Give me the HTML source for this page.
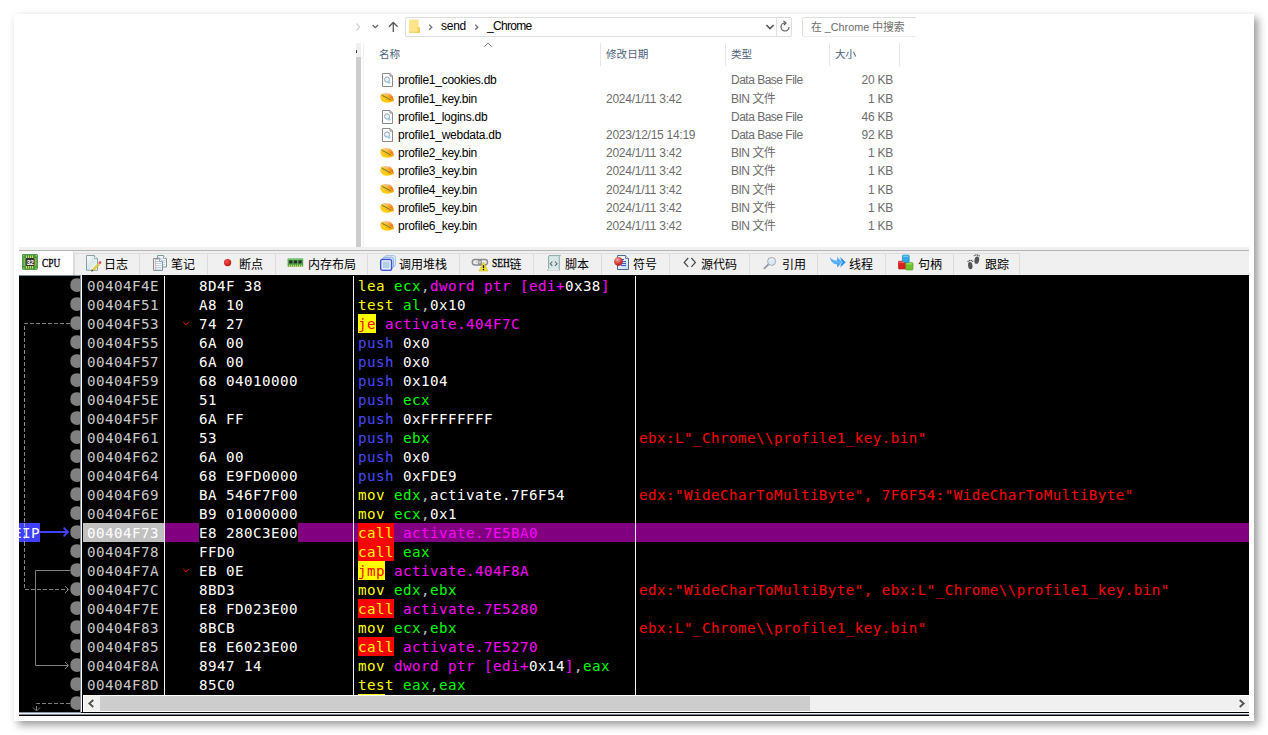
<!DOCTYPE html>
<html lang="zh-CN"><head><meta charset="utf-8"><title>x32dbg - _Chrome</title>
<style>
html,body{margin:0;padding:0;background:#fff;}
body{width:1268px;height:735px;position:relative;overflow:hidden;font-family:"Liberation Sans","Noto Sans CJK SC",sans-serif;}
.card{position:absolute;left:14px;top:14px;width:1240px;height:707px;background:#fff;box-shadow:4px 4px 8px rgba(0,0,0,.4);}
.abs{position:absolute;}
.ex{position:absolute;font-family:"Liberation Sans","Noto Sans CJK SC",sans-serif;font-size:12px;letter-spacing:-0.26px;color:#000;white-space:nowrap;line-height:16px;height:16px;}
.ex.h{color:#4c607a;font-size:10.6px;letter-spacing:0;}
.ex.t{letter-spacing:-0.5px;}
.ex.g{color:#6d6d6d;}
.dbg{position:absolute;left:19px;top:275px;width:1230px;height:438px;background:#000;overflow:hidden;}
.mono{font-family:"DejaVu Sans Mono","Liberation Mono",monospace;font-size:14.2px;line-height:19px;height:19px;white-space:pre;position:absolute;letter-spacing:0.452px;}
.y{color:#ffff00}.g{color:#00ff00}.c{color:#c0c0c0}.m{color:#ff00ff}.w{color:#fff}.b{color:#4848ff}
.je{color:#ff0000}.call{color:#ffff00}
.cm{color:#ff0000}
.ad{color:#c8c8c8}
.tab{position:absolute;top:253px;height:22px;box-sizing:border-box;border:1px solid #dcdcdc;border-bottom:none;background:#f0f0f0;}
.tt{position:absolute;top:259px;font-family:"Liberation Serif","Noto Sans CJK SC",sans-serif;font-weight:400;font-size:12px;line-height:12px;height:12px;color:#000;white-space:nowrap;}
.tt i{font-style:normal;font-weight:400;display:inline-block;transform:scaleX(.78);transform-origin:0 50%;width:18px;position:relative;top:-2px;-webkit-text-stroke:.3px #000;}
</style></head><body>
<div class="card"></div>

<div class="abs" style="left:355px;top:19px;width:561px;height:228px;background:#fff;overflow:hidden" id="explorer">
</div>
<div class="abs" style="left:356px;top:43px;width:5px;height:204px;background:#f0f0f0"></div>
<div class="abs" style="left:356px;top:57px;width:5px;height:190px;background:#cdcdcd"></div>
<div class="abs" style="left:363px;top:43px;width:1px;height:204px;background:#f2f2f2"></div>
<div class="abs" style="left:356px;top:50px;width:1px;height:3px;background:#444"></div>
<div class="abs" style="left:404.5px;top:16.5px;width:387px;height:20px;box-sizing:border-box;border:1px solid #dedede;border-radius:2px;background:#fff"></div>
<div class="abs" style="left:776px;top:17px;width:1px;height:19px;background:#e0e0e0"></div>
<div class="abs" style="left:802px;top:16.5px;width:116px;height:20px;box-sizing:border-box;border:1px solid #dedede;border-radius:2px;background:#fff;clip-path:inset(0 2px 0 0)"></div>
<svg class="abs" style="left:355px;top:17px" width="50" height="20" viewBox="0 0 50 20">
<path d="M1.5 6.5 L4.5 10 L1.5 13.5" fill="none" stroke="#d0d0d0" stroke-width="1.2"/>
<path d="M17.6 8 L20.3 10.7 L23 8" fill="none" stroke="#606060" stroke-width="1.2"/>
<path d="M38.3 15 V5.5 M34 9.8 L38.3 5.4 L42.6 9.8" fill="none" stroke="#555" stroke-width="1.3"/>
</svg>
<svg class="abs" style="left:408px;top:18px" width="14" height="16" viewBox="0 0 14 16">
<path d="M1 1.5 H10.6 V14.5 H1 Z" fill="#ffe48c"/><path d="M9.4 9 H12 V14.5 H9.4 Z" fill="#f6d264"/><path d="M1 13.8 H12 V14.8 H1 Z" fill="#f3cc58"/>
</svg>
<svg class="abs" style="left:426px;top:21px" width="10" height="12" viewBox="0 0 10 12"><path d="M3.2 3.6 L5.8 6.2 L3.2 8.8" fill="none" stroke="#707070" stroke-width="1.3"/></svg>
<div class="ex" style="left:441px;top:18px;">send</div>
<svg class="abs" style="left:472px;top:21px" width="10" height="12" viewBox="0 0 10 12"><path d="M3.2 3.6 L5.8 6.2 L3.2 8.8" fill="none" stroke="#707070" stroke-width="1.3"/></svg>
<div class="ex" style="left:487px;top:18px;letter-spacing:-0.7px">_Chrome</div>
<svg class="abs" style="left:764px;top:21px" width="12" height="12" viewBox="0 0 12 12"><path d="M2.4 4 L6 7.6 L9.6 4" fill="none" stroke="#555" stroke-width="1.5"/></svg>
<svg class="abs" style="left:779px;top:20px" width="12" height="14" viewBox="0 0 12 14"><path d="M6 3 A4 4 0 1 0 10 7" fill="none" stroke="#555" stroke-width="1.1"/><path d="M4.5 1 L7 3 L5 5" fill="none" stroke="#555" stroke-width="1.1"/></svg>
<div class="ex g" style="left:811px;top:19px;font-size:10.8px;letter-spacing:0">在 _Chrome 中搜索</div>
<div class="abs" style="left:600px;top:43px;width:1px;height:23px;background:#e5e5e5"></div>
<div class="abs" style="left:725px;top:43px;width:1px;height:23px;background:#e5e5e5"></div>
<div class="abs" style="left:829px;top:43px;width:1px;height:23px;background:#e5e5e5"></div>
<div class="abs" style="left:899px;top:43px;width:1px;height:23px;background:#e5e5e5"></div>
<div class="ex h" style="left:379px;top:46px;">名称</div>
<div class="ex h" style="left:606px;top:46px;">修改日期</div>
<div class="ex h" style="left:731px;top:46px;">类型</div>
<div class="ex h" style="left:835px;top:46px;">大小</div>
<svg class="abs" style="left:482px;top:41px" width="12" height="8" viewBox="0 0 12 8"><path d="M2.5 5.5 L6 2 L9.5 5.5" fill="none" stroke="#777" stroke-width="1"/></svg>
<svg class="abs" style="left:382px;top:73px" width="12" height="15" viewBox="0 0 12 15"><path d="M0.5 0.5 H8 L10.5 3 V13.5 H0.5 Z" fill="#fff" stroke="#8a8a8a" stroke-width="1"/><path d="M8 0.5 V3 H10.5" fill="none" stroke="#8a8a8a" stroke-width="1"/><circle cx="5" cy="6.5" r="2.6" fill="#e8eef5" stroke="#9aa7b5" stroke-width="1"/><circle cx="7" cy="9.3" r="1.5" fill="#9fd0f0"/></svg>
<div class="ex" style="left:398px;top:72px;">profile1_cookies.db</div>
<div class="ex g t" style="left:731px;top:72px;">Data Base File</div>
<div class="ex g" style="left:829px;top:72px;width:64px;text-align:right">20 KB</div>
<svg class="abs" style="left:380px;top:92px" width="15" height="12" viewBox="0 0 15 12"><defs><linearGradient id="bg1" x1="0.3" y1="0" x2="0.1" y2="1"><stop offset="0" stop-color="#fbc49a"/><stop offset="0.45" stop-color="#ffc830"/><stop offset="1" stop-color="#ffd400"/></linearGradient><radialGradient id="bo1" cx="0.85" cy="0.5" r="0.55"><stop offset="0" stop-color="#ff6a08"/><stop offset="1" stop-color="#ff8a10" stop-opacity="0"/></radialGradient></defs><path id="bp1" d="M0.3 4.2 C0.5 2.4 2.5 1.3 5 1 C8 0.6 10.6 1.2 12 3.4 C13 5 13.8 7.4 14 9 C12.6 9.6 11 10.1 9 10.6 C6 11.3 3 10.5 1.5 8.6 C0.5 7.2 0.2 5.6 0.3 4.2 Z" fill="url(#bg1)"/><path d="M0.3 4.2 C0.5 2.4 2.5 1.3 5 1 C8 0.6 10.6 1.2 12 3.4 C13 5 13.8 7.4 14 9 C12.6 9.6 11 10.1 9 10.6 C6 11.3 3 10.5 1.5 8.6 C0.5 7.2 0.2 5.6 0.3 4.2 Z" fill="url(#bo1)"/><path d="M1.6 2.6 L11.2 7.4" stroke="#d8cc20" stroke-width="1.6" stroke-linecap="round"/><path d="M2.4 3.6 L10.8 7.8" stroke="#7a6a18" stroke-width="0.9" stroke-linecap="round"/></svg>
<div class="ex" style="left:398px;top:91px;">profile1_key.bin</div>
<div class="ex g" style="left:606px;top:91px;">2024/1/11 3:42</div>
<div class="ex g t" style="left:731px;top:91px;">BIN 文件</div>
<div class="ex g" style="left:829px;top:91px;width:64px;text-align:right">1 KB</div>
<svg class="abs" style="left:382px;top:110px" width="12" height="15" viewBox="0 0 12 15"><path d="M0.5 0.5 H8 L10.5 3 V13.5 H0.5 Z" fill="#fff" stroke="#8a8a8a" stroke-width="1"/><path d="M8 0.5 V3 H10.5" fill="none" stroke="#8a8a8a" stroke-width="1"/><circle cx="5" cy="6.5" r="2.6" fill="#e8eef5" stroke="#9aa7b5" stroke-width="1"/><circle cx="7" cy="9.3" r="1.5" fill="#9fd0f0"/></svg>
<div class="ex" style="left:398px;top:109px;">profile1_logins.db</div>
<div class="ex g t" style="left:731px;top:109px;">Data Base File</div>
<div class="ex g" style="left:829px;top:109px;width:64px;text-align:right">46 KB</div>
<svg class="abs" style="left:382px;top:128px" width="12" height="15" viewBox="0 0 12 15"><path d="M0.5 0.5 H8 L10.5 3 V13.5 H0.5 Z" fill="#fff" stroke="#8a8a8a" stroke-width="1"/><path d="M8 0.5 V3 H10.5" fill="none" stroke="#8a8a8a" stroke-width="1"/><circle cx="5" cy="6.5" r="2.6" fill="#e8eef5" stroke="#9aa7b5" stroke-width="1"/><circle cx="7" cy="9.3" r="1.5" fill="#9fd0f0"/></svg>
<div class="ex" style="left:398px;top:127px;">profile1_webdata.db</div>
<div class="ex g" style="left:606px;top:127px;">2023/12/15 14:19</div>
<div class="ex g t" style="left:731px;top:127px;">Data Base File</div>
<div class="ex g" style="left:829px;top:127px;width:64px;text-align:right">92 KB</div>
<svg class="abs" style="left:380px;top:147px" width="15" height="12" viewBox="0 0 15 12"><defs><linearGradient id="bg4" x1="0.3" y1="0" x2="0.1" y2="1"><stop offset="0" stop-color="#fbc49a"/><stop offset="0.45" stop-color="#ffc830"/><stop offset="1" stop-color="#ffd400"/></linearGradient><radialGradient id="bo4" cx="0.85" cy="0.5" r="0.55"><stop offset="0" stop-color="#ff6a08"/><stop offset="1" stop-color="#ff8a10" stop-opacity="0"/></radialGradient></defs><path id="bp4" d="M0.3 4.2 C0.5 2.4 2.5 1.3 5 1 C8 0.6 10.6 1.2 12 3.4 C13 5 13.8 7.4 14 9 C12.6 9.6 11 10.1 9 10.6 C6 11.3 3 10.5 1.5 8.6 C0.5 7.2 0.2 5.6 0.3 4.2 Z" fill="url(#bg4)"/><path d="M0.3 4.2 C0.5 2.4 2.5 1.3 5 1 C8 0.6 10.6 1.2 12 3.4 C13 5 13.8 7.4 14 9 C12.6 9.6 11 10.1 9 10.6 C6 11.3 3 10.5 1.5 8.6 C0.5 7.2 0.2 5.6 0.3 4.2 Z" fill="url(#bo4)"/><path d="M1.6 2.6 L11.2 7.4" stroke="#d8cc20" stroke-width="1.6" stroke-linecap="round"/><path d="M2.4 3.6 L10.8 7.8" stroke="#7a6a18" stroke-width="0.9" stroke-linecap="round"/></svg>
<div class="ex" style="left:398px;top:145px;">profile2_key.bin</div>
<div class="ex g" style="left:606px;top:145px;">2024/1/11 3:42</div>
<div class="ex g t" style="left:731px;top:145px;">BIN 文件</div>
<div class="ex g" style="left:829px;top:145px;width:64px;text-align:right">1 KB</div>
<svg class="abs" style="left:380px;top:165px" width="15" height="12" viewBox="0 0 15 12"><defs><linearGradient id="bg5" x1="0.3" y1="0" x2="0.1" y2="1"><stop offset="0" stop-color="#fbc49a"/><stop offset="0.45" stop-color="#ffc830"/><stop offset="1" stop-color="#ffd400"/></linearGradient><radialGradient id="bo5" cx="0.85" cy="0.5" r="0.55"><stop offset="0" stop-color="#ff6a08"/><stop offset="1" stop-color="#ff8a10" stop-opacity="0"/></radialGradient></defs><path id="bp5" d="M0.3 4.2 C0.5 2.4 2.5 1.3 5 1 C8 0.6 10.6 1.2 12 3.4 C13 5 13.8 7.4 14 9 C12.6 9.6 11 10.1 9 10.6 C6 11.3 3 10.5 1.5 8.6 C0.5 7.2 0.2 5.6 0.3 4.2 Z" fill="url(#bg5)"/><path d="M0.3 4.2 C0.5 2.4 2.5 1.3 5 1 C8 0.6 10.6 1.2 12 3.4 C13 5 13.8 7.4 14 9 C12.6 9.6 11 10.1 9 10.6 C6 11.3 3 10.5 1.5 8.6 C0.5 7.2 0.2 5.6 0.3 4.2 Z" fill="url(#bo5)"/><path d="M1.6 2.6 L11.2 7.4" stroke="#d8cc20" stroke-width="1.6" stroke-linecap="round"/><path d="M2.4 3.6 L10.8 7.8" stroke="#7a6a18" stroke-width="0.9" stroke-linecap="round"/></svg>
<div class="ex" style="left:398px;top:163px;">profile3_key.bin</div>
<div class="ex g" style="left:606px;top:163px;">2024/1/11 3:42</div>
<div class="ex g t" style="left:731px;top:163px;">BIN 文件</div>
<div class="ex g" style="left:829px;top:163px;width:64px;text-align:right">1 KB</div>
<svg class="abs" style="left:380px;top:183px" width="15" height="12" viewBox="0 0 15 12"><defs><linearGradient id="bg6" x1="0.3" y1="0" x2="0.1" y2="1"><stop offset="0" stop-color="#fbc49a"/><stop offset="0.45" stop-color="#ffc830"/><stop offset="1" stop-color="#ffd400"/></linearGradient><radialGradient id="bo6" cx="0.85" cy="0.5" r="0.55"><stop offset="0" stop-color="#ff6a08"/><stop offset="1" stop-color="#ff8a10" stop-opacity="0"/></radialGradient></defs><path id="bp6" d="M0.3 4.2 C0.5 2.4 2.5 1.3 5 1 C8 0.6 10.6 1.2 12 3.4 C13 5 13.8 7.4 14 9 C12.6 9.6 11 10.1 9 10.6 C6 11.3 3 10.5 1.5 8.6 C0.5 7.2 0.2 5.6 0.3 4.2 Z" fill="url(#bg6)"/><path d="M0.3 4.2 C0.5 2.4 2.5 1.3 5 1 C8 0.6 10.6 1.2 12 3.4 C13 5 13.8 7.4 14 9 C12.6 9.6 11 10.1 9 10.6 C6 11.3 3 10.5 1.5 8.6 C0.5 7.2 0.2 5.6 0.3 4.2 Z" fill="url(#bo6)"/><path d="M1.6 2.6 L11.2 7.4" stroke="#d8cc20" stroke-width="1.6" stroke-linecap="round"/><path d="M2.4 3.6 L10.8 7.8" stroke="#7a6a18" stroke-width="0.9" stroke-linecap="round"/></svg>
<div class="ex" style="left:398px;top:182px;">profile4_key.bin</div>
<div class="ex g" style="left:606px;top:182px;">2024/1/11 3:42</div>
<div class="ex g t" style="left:731px;top:182px;">BIN 文件</div>
<div class="ex g" style="left:829px;top:182px;width:64px;text-align:right">1 KB</div>
<svg class="abs" style="left:380px;top:202px" width="15" height="12" viewBox="0 0 15 12"><defs><linearGradient id="bg7" x1="0.3" y1="0" x2="0.1" y2="1"><stop offset="0" stop-color="#fbc49a"/><stop offset="0.45" stop-color="#ffc830"/><stop offset="1" stop-color="#ffd400"/></linearGradient><radialGradient id="bo7" cx="0.85" cy="0.5" r="0.55"><stop offset="0" stop-color="#ff6a08"/><stop offset="1" stop-color="#ff8a10" stop-opacity="0"/></radialGradient></defs><path id="bp7" d="M0.3 4.2 C0.5 2.4 2.5 1.3 5 1 C8 0.6 10.6 1.2 12 3.4 C13 5 13.8 7.4 14 9 C12.6 9.6 11 10.1 9 10.6 C6 11.3 3 10.5 1.5 8.6 C0.5 7.2 0.2 5.6 0.3 4.2 Z" fill="url(#bg7)"/><path d="M0.3 4.2 C0.5 2.4 2.5 1.3 5 1 C8 0.6 10.6 1.2 12 3.4 C13 5 13.8 7.4 14 9 C12.6 9.6 11 10.1 9 10.6 C6 11.3 3 10.5 1.5 8.6 C0.5 7.2 0.2 5.6 0.3 4.2 Z" fill="url(#bo7)"/><path d="M1.6 2.6 L11.2 7.4" stroke="#d8cc20" stroke-width="1.6" stroke-linecap="round"/><path d="M2.4 3.6 L10.8 7.8" stroke="#7a6a18" stroke-width="0.9" stroke-linecap="round"/></svg>
<div class="ex" style="left:398px;top:200px;">profile5_key.bin</div>
<div class="ex g" style="left:606px;top:200px;">2024/1/11 3:42</div>
<div class="ex g t" style="left:731px;top:200px;">BIN 文件</div>
<div class="ex g" style="left:829px;top:200px;width:64px;text-align:right">1 KB</div>
<svg class="abs" style="left:380px;top:220px" width="15" height="12" viewBox="0 0 15 12"><defs><linearGradient id="bg8" x1="0.3" y1="0" x2="0.1" y2="1"><stop offset="0" stop-color="#fbc49a"/><stop offset="0.45" stop-color="#ffc830"/><stop offset="1" stop-color="#ffd400"/></linearGradient><radialGradient id="bo8" cx="0.85" cy="0.5" r="0.55"><stop offset="0" stop-color="#ff6a08"/><stop offset="1" stop-color="#ff8a10" stop-opacity="0"/></radialGradient></defs><path id="bp8" d="M0.3 4.2 C0.5 2.4 2.5 1.3 5 1 C8 0.6 10.6 1.2 12 3.4 C13 5 13.8 7.4 14 9 C12.6 9.6 11 10.1 9 10.6 C6 11.3 3 10.5 1.5 8.6 C0.5 7.2 0.2 5.6 0.3 4.2 Z" fill="url(#bg8)"/><path d="M0.3 4.2 C0.5 2.4 2.5 1.3 5 1 C8 0.6 10.6 1.2 12 3.4 C13 5 13.8 7.4 14 9 C12.6 9.6 11 10.1 9 10.6 C6 11.3 3 10.5 1.5 8.6 C0.5 7.2 0.2 5.6 0.3 4.2 Z" fill="url(#bo8)"/><path d="M1.6 2.6 L11.2 7.4" stroke="#d8cc20" stroke-width="1.6" stroke-linecap="round"/><path d="M2.4 3.6 L10.8 7.8" stroke="#7a6a18" stroke-width="0.9" stroke-linecap="round"/></svg>
<div class="ex" style="left:398px;top:218px;">profile6_key.bin</div>
<div class="ex g" style="left:606px;top:218px;">2024/1/11 3:42</div>
<div class="ex g t" style="left:731px;top:218px;">BIN 文件</div>
<div class="ex g" style="left:829px;top:218px;width:64px;text-align:right">1 KB</div>
<div class="abs" style="left:19px;top:247px;width:1230px;height:3px;background:#f0f0f0"></div>
<div class="abs" style="left:19px;top:250px;width:1230px;height:1px;background:#b4b4b4"></div>
<div class="abs" style="left:19px;top:251px;width:1230px;height:24px;background:#f0f0f0"></div>
<div class="abs" style="left:19px;top:251px;width:55px;height:24px;background:#fff;border-right:1px solid #dcdcdc;box-sizing:border-box"></div>
<div class="tt" style="left:41.5px"><i>CPU</i></div>
<div class="tab" style="left:74px;width:66px"></div>
<div class="tt" style="left:104px">日志</div>
<div class="tab" style="left:139px;width:69px"></div>
<div class="tt" style="left:171px">笔记</div>
<div class="tab" style="left:207px;width:69px"></div>
<div class="tt" style="left:239px">断点</div>
<div class="tab" style="left:275px;width:93px"></div>
<div class="tt" style="left:308px">内存布局</div>
<div class="tab" style="left:367px;width:93px"></div>
<div class="tt" style="left:399px">调用堆栈</div>
<div class="tab" style="left:459px;width:75px"></div>
<div class="tt" style="left:491.5px"><i>SEH</i>链</div>
<div class="tab" style="left:533px;width:69px"></div>
<div class="tt" style="left:565px">脚本</div>
<div class="tab" style="left:601px;width:69px"></div>
<div class="tt" style="left:633px">符号</div>
<div class="tab" style="left:669px;width:81px"></div>
<div class="tt" style="left:701px">源代码</div>
<div class="tab" style="left:749px;width:69px"></div>
<div class="tt" style="left:782px">引用</div>
<div class="tab" style="left:817px;width:69px"></div>
<div class="tt" style="left:849px">线程</div>
<div class="tab" style="left:885px;width:69px"></div>
<div class="tt" style="left:918px">句柄</div>
<div class="tab" style="left:953px;width:67px"></div>
<div class="tt" style="left:985px">跟踪</div>
<svg class="abs" style="left:22px;top:254px" width="16" height="16" viewBox="0 0 16 16">
<rect x="0.3" y="0.3" width="15.2" height="15.2" rx="1.2" fill="#3d9b3d" stroke="#2b7a2b" stroke-width=".6"/>
<g fill="#e8d060"><rect x="4" y="1.5" width="1" height="2.5"/><rect x="6" y="1.5" width="1" height="2.5"/><rect x="8" y="1.5" width="1" height="2.5"/><rect x="10" y="1.5" width="1" height="2.5"/>
<rect x="4" y="12" width="1" height="2.5"/><rect x="6" y="12" width="1" height="2.5"/><rect x="8" y="12" width="1" height="2.5"/><rect x="10" y="12" width="1" height="2.5"/>
<rect x="1.5" y="4.5" width="2.5" height="1"/><rect x="1.5" y="6.5" width="2.5" height="1"/><rect x="1.5" y="8.5" width="2.5" height="1"/><rect x="1.5" y="10.5" width="2.5" height="1"/>
<rect x="12" y="4.5" width="2.5" height="1"/><rect x="12" y="6.5" width="2.5" height="1"/><rect x="12" y="8.5" width="2.5" height="1"/><rect x="12" y="10.5" width="2.5" height="1"/>
<rect x="1.2" y="1.2" width="1.2" height="1.2"/><rect x="13.6" y="1.2" width="1.2" height="1.2"/><rect x="1.2" y="13.6" width="1.2" height="1.2"/><rect x="13.6" y="13.6" width="1.2" height="1.2"/></g>
<rect x="3.5" y="4" width="9" height="8" rx="1" fill="#333"/>
<text x="8" y="10.6" font-family="Liberation Sans,sans-serif" font-weight="bold" font-size="7" fill="#fff" text-anchor="middle" letter-spacing="-0.3">32</text>
</svg>
<svg class="abs" style="left:84px;top:254px" width="18" height="18" viewBox="0 0 18 18">
<defs><linearGradient id="pg1" x1="0" y1="0" x2="1" y2="1"><stop offset="0" stop-color="#fdffff"/><stop offset=".5" stop-color="#d8e8e8"/><stop offset="1" stop-color="#ffffff"/></linearGradient></defs>
<path d="M2.5 1.5 H10.5 L13.5 4.5 V16.3 H2.5 Z" fill="url(#pg1)" stroke="#8aa0a0" stroke-width="1"/>
<path d="M10.5 1.5 V4.5 H13.5" fill="#fff" stroke="#8aa0a0" stroke-width=".8"/>
<path d="M8 15.8 L14.3 9.2 L15.8 10.6 L9.4 17 Z" fill="#e8d040" stroke="#b09820" stroke-width=".4"/>
<path d="M14.3 9.2 L15.2 8.2 L16.7 9.6 L15.8 10.6 Z" fill="#dde"/>
<circle cx="16" cy="8.6" r="1.3" fill="#f04050"/>
<path d="M8 15.8 L7.2 17.5 L9.4 17 Z" fill="#222"/>
</svg>
<svg class="abs" style="left:152px;top:254px" width="17" height="18" viewBox="0 0 17 18">
<g><path d="M5.5 1.5 H11.5 L14.5 4.5 V13 H5.5 Z" fill="#f4f7ff" stroke="#7f9896" stroke-width="1"/>
<path d="M7 3 V6" stroke="#f4a0a0" stroke-width=".8"/><path d="M8 4.5 H11 M8 6.5 H13.5 M10.5 8.5 H13.5 M10.5 10.5 H13.5" stroke="#c0cdf0" stroke-width=".8"/>
<path d="M11.5 1.5 V4.5 H14.5" fill="#fff" stroke="#7f9896" stroke-width=".8"/></g>
<g><path d="M1.5 4.5 H7.5 L10.5 7.5 V16.5 H1.5 Z" fill="#f6f8ff" stroke="#7f9896" stroke-width="1"/>
<path d="M3.5 5.5 H7 M3.5 7.5 H7.5 M3.5 9.5 H9.5 M3.5 11.5 H9.5 M3.5 13.5 H9.5 M3.5 15.2 H9.5" stroke="#b8c6f0" stroke-width=".9"/>
<path d="M3.3 5 V16" stroke="#f4a0a0" stroke-width="1"/>
<path d="M7.5 4.5 V7.5 H10.5" fill="#fff" stroke="#7f9896" stroke-width=".8"/></g>
</svg>
<svg class="abs" style="left:223px;top:258px" width="10" height="10" viewBox="0 0 10 10">
<defs><radialGradient id="rd1" cx=".4" cy=".35" r=".7"><stop offset="0" stop-color="#f05050"/><stop offset="1" stop-color="#c01010"/></radialGradient></defs>
<circle cx="4.6" cy="4.6" r="3.6" fill="url(#rd1)"/></svg>
<svg class="abs" style="left:287px;top:258px" width="17" height="10" viewBox="0 0 17 10">
<rect x=".6" y=".6" width="15.6" height="8.2" rx=".8" fill="#4aa84a"/>
<rect x=".6" y=".6" width="15.6" height="1.2" fill="#7cc87c"/>
<g fill="#2a2a2a"><rect x="2.2" y="2.4" width="3.2" height="3"/><rect x="6.8" y="2.4" width="3.2" height="3"/><rect x="11.4" y="2.4" width="3.2" height="3"/></g>
<g fill="#e8d060"><rect x="2" y="6.8" width="1" height="2"/><rect x="4" y="6.8" width="1" height="2"/><rect x="6" y="6.8" width="1" height="2"/><rect x="8" y="6.8" width="1" height="2"/><rect x="10" y="6.8" width="1" height="2"/><rect x="12" y="6.8" width="1" height="2"/><rect x="14" y="6.8" width="1" height="2"/></g>
</svg>
<svg class="abs" style="left:379px;top:254px" width="18" height="18" viewBox="0 0 18 18">
<rect x="5.5" y="1.5" width="11" height="11" rx="2" fill="#dbe8f6" stroke="#a8c4e6" stroke-width="1"/>
<rect x="3.5" y="3.3" width="11" height="11" rx="2" fill="#d4e3f4" stroke="#8db2de" stroke-width="1"/>
<rect x="1.6" y="5.4" width="11" height="11" rx="2" fill="#c9dcf0" stroke="#3c50e0" stroke-width="1.3"/>
<rect x="3.4" y="7.2" width="7.4" height="7.4" fill="#b4cde8" stroke="#e4eef8" stroke-width=".8"/>
</svg>
<svg class="abs" style="left:471px;top:257px" width="18" height="15" viewBox="0 0 18 15">
<rect x="1.3" y="2.5" width="9" height="5.4" rx="2.7" fill="none" stroke="#8c8c8c" stroke-width="1.5"/>
<rect x="7.5" y="2.5" width="9" height="5.4" rx="2.7" fill="none" stroke="#8c8c8c" stroke-width="1.5"/>
<path d="M4.5 5.2 H10.5" stroke="#c8c8c8" stroke-width="1.2"/>
<path d="M12.5 5 L17 14 H8 Z" fill="#f0e030" stroke="#c8b820" stroke-width=".6"/>
<path d="M12.5 8.2 V11" stroke="#111" stroke-width="1.3"/><circle cx="12.5" cy="12.5" r=".8" fill="#111"/>
</svg>
<svg class="abs" style="left:546px;top:254px" width="16" height="18" viewBox="0 0 16 18">
<path d="M3 1.6 H14.4 C13.4 2.4 13.3 3 13.3 4 V16.4 H1.2 C2.4 15.6 2.6 15 2.6 14 V3 C2.6 2.2 2.8 1.8 3 1.6 Z" fill="#d6e8e8" stroke="#8aa6a4" stroke-width="1"/>
<path d="M1.5 16 H13" stroke="#fff" stroke-width="1"/>
<path d="M6.3 7.5 L4.3 9.7 L6.3 11.9 M9 7.5 L11 9.7 L9 11.9" fill="none" stroke="#666" stroke-width="1.1"/>
</svg>
<svg class="abs" style="left:613px;top:254px" width="18" height="18" viewBox="0 0 18 18">
<defs><radialGradient id="rd2" cx=".4" cy=".3" r=".75"><stop offset="0" stop-color="#f8b0a8"/><stop offset=".5" stop-color="#d84840"/><stop offset="1" stop-color="#a01818"/></radialGradient>
<linearGradient id="pg2" x1="0" y1="0" x2="1" y2="1"><stop offset="0" stop-color="#ffffff"/><stop offset="1" stop-color="#c8d8f0"/></linearGradient></defs>
<path d="M4.5 1.5 H12.5 L15.5 4.5 V15.5 H4.5 Z" fill="url(#pg2)" stroke="#4a6890" stroke-width="1"/>
<path d="M12.5 1.5 V4.5 H15.5" fill="#e8f0ff" stroke="#4a6890" stroke-width=".8"/>
<path d="M8 5.5 H11 M8 7.6 H13 M8 9.6 H13 M8 11.6 H13" stroke="#2050d0" stroke-width="1"/>
<circle cx="5.5" cy="7.5" r="4.4" fill="url(#rd2)"/>
</svg>
<svg class="abs" style="left:683px;top:257px" width="14" height="11" viewBox="0 0 14 11">
<path d="M5.2 1 L1.2 5.4 L5.2 9.8 M8.4 1 L12.4 5.4 L8.4 9.8" fill="none" stroke="#444" stroke-width="1.2"/></svg>
<svg class="abs" style="left:763px;top:256px" width="14" height="14" viewBox="0 0 14 14">
<path d="M5.8 8 L1.4 12.4" stroke="#9a9aa8" stroke-width="1.8" stroke-linecap="round"/>
<circle cx="8.6" cy="5.4" r="4" fill="#dce8f6" stroke="#a8a8a8" stroke-width="1"/>
<path d="M6.5 4.8 A2.4 2.4 0 0 1 10.6 4.2" fill="none" stroke="#fff" stroke-width=".8"/>
</svg>
<svg class="abs" style="left:829px;top:256px" width="18" height="13" viewBox="0 0 18 13">
<defs><linearGradient id="bl1" x1="0" y1="0" x2="0" y2="1"><stop offset="0" stop-color="#3a8ee0"/><stop offset=".5" stop-color="#60b8f8"/><stop offset="1" stop-color="#1888e8"/></linearGradient></defs>
<path d="M1 .8 C2 3.8 5 4.6 8.2 4.4 V1 L13 6.2 L8.2 11.6 V8.2 C4.4 8.6 1.6 6 1 .8 Z" fill="url(#bl1)"/>
<path d="M11.2 1 L16.8 6.2 L11.2 11.6 L12.6 6.2 Z" fill="#2a90ee"/>
<path d="M9.6 2.4 L13.4 6.2 L9.6 10.2" fill="none" stroke="#9ad4ff" stroke-width=".8"/>
</svg>
<svg class="abs" style="left:898px;top:254px" width="16" height="17" viewBox="0 0 16 17">
<rect x=".4" y="7.2" width="7.6" height="7.8" rx="1" fill="#e02020" stroke="#b01010" stroke-width=".6"/>
<rect x="7.6" y="8.6" width="7.4" height="7.4" rx="1" fill="#70c030" stroke="#4a9818" stroke-width=".6"/>
<rect x="4.4" y="1" width="6.8" height="7.4" rx="1" fill="#30a8e8" stroke="#1880c0" stroke-width=".6"/>
<rect x="5.2" y="1.6" width="5.2" height="1.2" fill="#80d0f8"/><rect x="1.2" y="7.8" width="5" height="1.2" fill="#f06060"/><rect x="8.4" y="9.2" width="5.8" height="1.2" fill="#a0e060"/>
</svg>
<svg class="abs" style="left:967px;top:254px" width="15" height="17" viewBox="0 0 15 17">
<g fill="#555">
<ellipse cx="9.8" cy="6.2" rx="2.3" ry="3.7" transform="rotate(12 9.8 6.2)"/>
<circle cx="7.2" cy="1.6" r=".7"/><circle cx="8.8" cy="1" r=".8"/><circle cx="10.6" cy="1.1" r=".8"/><circle cx="12.2" cy="1.8" r=".7"/>
<ellipse cx="3.3" cy="11.6" rx="2.2" ry="3.6" transform="rotate(-8 3.3 11.6)"/>
<circle cx="1" cy="7.4" r=".7"/><circle cx="2.4" cy="6.6" r=".8"/><circle cx="4.2" cy="6.5" r=".8"/><circle cx="5.6" cy="7.2" r=".7"/>
</g></svg>
<div class="dbg">
<div class="abs" style="left:51.3px;top:3.2px;width:14px;height:14px;border-radius:50%;background:#808080;clip-path:inset(0 4.3px 0 0)"></div>
<div class="abs" style="left:51.3px;top:22.2px;width:14px;height:14px;border-radius:50%;background:#808080;clip-path:inset(0 4.3px 0 0)"></div>
<div class="abs" style="left:51.3px;top:41.2px;width:14px;height:14px;border-radius:50%;background:#808080;clip-path:inset(0 4.3px 0 0)"></div>
<div class="abs" style="left:51.3px;top:60.2px;width:14px;height:14px;border-radius:50%;background:#808080;clip-path:inset(0 4.3px 0 0)"></div>
<div class="abs" style="left:51.3px;top:79.2px;width:14px;height:14px;border-radius:50%;background:#808080;clip-path:inset(0 4.3px 0 0)"></div>
<div class="abs" style="left:51.3px;top:98.2px;width:14px;height:14px;border-radius:50%;background:#808080;clip-path:inset(0 4.3px 0 0)"></div>
<div class="abs" style="left:51.3px;top:117.2px;width:14px;height:14px;border-radius:50%;background:#808080;clip-path:inset(0 4.3px 0 0)"></div>
<div class="abs" style="left:51.3px;top:136.2px;width:14px;height:14px;border-radius:50%;background:#808080;clip-path:inset(0 4.3px 0 0)"></div>
<div class="abs" style="left:51.3px;top:155.2px;width:14px;height:14px;border-radius:50%;background:#808080;clip-path:inset(0 4.3px 0 0)"></div>
<div class="abs" style="left:51.3px;top:174.2px;width:14px;height:14px;border-radius:50%;background:#808080;clip-path:inset(0 4.3px 0 0)"></div>
<div class="abs" style="left:51.3px;top:193.2px;width:14px;height:14px;border-radius:50%;background:#808080;clip-path:inset(0 4.3px 0 0)"></div>
<div class="abs" style="left:51.3px;top:212.2px;width:14px;height:14px;border-radius:50%;background:#808080;clip-path:inset(0 4.3px 0 0)"></div>
<div class="abs" style="left:51.3px;top:231.2px;width:14px;height:14px;border-radius:50%;background:#808080;clip-path:inset(0 4.3px 0 0)"></div>
<div class="abs" style="left:51.3px;top:250.2px;width:14px;height:14px;border-radius:50%;background:#808080;clip-path:inset(0 4.3px 0 0)"></div>
<div class="abs" style="left:51.3px;top:269.2px;width:14px;height:14px;border-radius:50%;background:#808080;clip-path:inset(0 4.3px 0 0)"></div>
<div class="abs" style="left:51.3px;top:288.2px;width:14px;height:14px;border-radius:50%;background:#808080;clip-path:inset(0 4.3px 0 0)"></div>
<div class="abs" style="left:51.3px;top:307.2px;width:14px;height:14px;border-radius:50%;background:#808080;clip-path:inset(0 4.3px 0 0)"></div>
<div class="abs" style="left:51.3px;top:326.2px;width:14px;height:14px;border-radius:50%;background:#808080;clip-path:inset(0 4.3px 0 0)"></div>
<div class="abs" style="left:51.3px;top:345.2px;width:14px;height:14px;border-radius:50%;background:#808080;clip-path:inset(0 4.3px 0 0)"></div>
<div class="abs" style="left:51.3px;top:364.2px;width:14px;height:14px;border-radius:50%;background:#808080;clip-path:inset(0 4.3px 0 0)"></div>
<div class="abs" style="left:51.3px;top:383.2px;width:14px;height:14px;border-radius:50%;background:#808080;clip-path:inset(0 4.3px 0 0)"></div>
<div class="abs" style="left:51.3px;top:402.2px;width:14px;height:14px;border-radius:50%;background:#808080;clip-path:inset(0 4.3px 0 0)"></div>
<div class="abs" style="left:51.3px;top:421.2px;width:14px;height:14px;border-radius:50%;background:#808080;clip-path:inset(0 4.3px 0 0)"></div>
<div class="abs" style="left:61px;top:0;width:1px;height:437px;background:#8492a4"></div>
<div class="abs" style="left:62px;top:0;width:1px;height:437px;background:#fff"></div>
<div class="abs" style="left:0;top:0;width:61px;height:1px;background:#7c8896"></div>
<div class="abs" style="left:63px;top:248px;width:1167px;height:19px;background:#800080"></div>
<div class="abs" style="left:63px;top:248px;width:1px;height:19px;background:#000"></div>
<div class="abs" style="left:64px;top:248px;width:81px;height:19px;background:#c0c0c0"></div>
<div class="abs" style="left:180px;top:248px;width:99px;height:19px;background:#000"></div>
<div class="abs" style="left:145px;top:1px;width:1px;height:419px;background:#f0f0f0"></div>
<div class="abs" style="left:334px;top:1px;width:1px;height:419px;background:#f0f0f0"></div>
<div class="abs" style="left:616px;top:1px;width:1px;height:419px;background:#f0f0f0"></div>
<div class="mono ad" style="left:68px;top:2px">00404F4E</div>
<div class="mono w" style="left:180px;top:2px">8D4F 38</div>
<div class="mono" style="left:339px;top:2px"><span class="y">lea</span> <span class="g">ecx</span><span class="c">,</span><span class="m">dword ptr [</span><span class="m">edi</span><span class="m">+</span><span class="w">0x38</span><span class="m">]</span></div>
<div class="mono ad" style="left:68px;top:21px">00404F51</div>
<div class="mono w" style="left:180px;top:21px">A8 10</div>
<div class="mono" style="left:339px;top:21px"><span class="y">test</span> <span class="g">al</span><span class="c">,</span><span class="w">0x10</span></div>
<div class="mono ad" style="left:68px;top:40px">00404F53</div>
<div class="mono w" style="left:180px;top:40px">74 27</div>
<div class="abs" style="left:339px;top:39px;width:18px;height:19px;background:#ffff00"></div>
<div class="mono" style="left:339px;top:40px"><span class="je">je</span> <span class="m">activate.404F7C</span></div>
<svg class="abs" style="left:163px;top:45px" width="8" height="8" viewBox="0 0 8 8"><path d="M1.2 2 L4 4.8 L6.8 2" fill="none" stroke="#ff0000" stroke-width="1"/></svg>
<div class="mono ad" style="left:68px;top:59px">00404F55</div>
<div class="mono w" style="left:180px;top:59px">6A 00</div>
<div class="mono" style="left:339px;top:59px"><span class="b">push</span> <span class="w">0x0</span></div>
<div class="mono ad" style="left:68px;top:78px">00404F57</div>
<div class="mono w" style="left:180px;top:78px">6A 00</div>
<div class="mono" style="left:339px;top:78px"><span class="b">push</span> <span class="w">0x0</span></div>
<div class="mono ad" style="left:68px;top:97px">00404F59</div>
<div class="mono w" style="left:180px;top:97px">68 04010000</div>
<div class="mono" style="left:339px;top:97px"><span class="b">push</span> <span class="w">0x104</span></div>
<div class="mono ad" style="left:68px;top:116px">00404F5E</div>
<div class="mono w" style="left:180px;top:116px">51</div>
<div class="mono" style="left:339px;top:116px"><span class="b">push</span> <span class="g">ecx</span></div>
<div class="mono ad" style="left:68px;top:135px">00404F5F</div>
<div class="mono w" style="left:180px;top:135px">6A FF</div>
<div class="mono" style="left:339px;top:135px"><span class="b">push</span> <span class="w">0xFFFFFFFF</span></div>
<div class="mono ad" style="left:68px;top:154px">00404F61</div>
<div class="mono w" style="left:180px;top:154px">53</div>
<div class="mono" style="left:339px;top:154px"><span class="b">push</span> <span class="g">ebx</span></div>
<div class="mono cm" style="left:620px;top:154px">ebx:L"_Chrome\\profile1_key.bin"</div>
<div class="mono ad" style="left:68px;top:173px">00404F62</div>
<div class="mono w" style="left:180px;top:173px">6A 00</div>
<div class="mono" style="left:339px;top:173px"><span class="b">push</span> <span class="w">0x0</span></div>
<div class="mono ad" style="left:68px;top:192px">00404F64</div>
<div class="mono w" style="left:180px;top:192px">68 E9FD0000</div>
<div class="mono" style="left:339px;top:192px"><span class="b">push</span> <span class="w">0xFDE9</span></div>
<div class="mono ad" style="left:68px;top:211px">00404F69</div>
<div class="mono w" style="left:180px;top:211px">BA 546F7F00</div>
<div class="mono" style="left:339px;top:211px"><span class="y">mov</span> <span class="g">edx</span><span class="c">,</span><span class="w">activate.7F6F54</span></div>
<div class="mono cm" style="left:620px;top:211px">edx:"WideCharToMultiByte", 7F6F54:"WideCharToMultiByte"</div>
<div class="mono ad" style="left:68px;top:230px">00404F6E</div>
<div class="mono w" style="left:180px;top:230px">B9 01000000</div>
<div class="mono" style="left:339px;top:230px"><span class="y">mov</span> <span class="g">ecx</span><span class="c">,</span><span class="w">0x1</span></div>
<div class="mono w" style="left:68px;top:249px">00404F73</div>
<div class="mono w" style="left:180px;top:249px">E8 280C3E00</div>
<div class="abs" style="left:339px;top:248px;width:36px;height:19px;background:#ff0000"></div>
<div class="mono" style="left:339px;top:249px"><span class="call">call</span> <span class="m">activate.7E5BA0</span></div>
<div class="mono ad" style="left:68px;top:268px">00404F78</div>
<div class="mono w" style="left:180px;top:268px">FFD0</div>
<div class="abs" style="left:339px;top:267px;width:36px;height:19px;background:#ff0000"></div>
<div class="mono" style="left:339px;top:268px"><span class="call">call</span> <span class="g">eax</span></div>
<div class="mono ad" style="left:68px;top:287px">00404F7A</div>
<div class="mono w" style="left:180px;top:287px">EB 0E</div>
<div class="abs" style="left:339px;top:286px;width:27px;height:19px;background:#ffff00"></div>
<div class="mono" style="left:339px;top:287px"><span class="je">jmp</span> <span class="m">activate.404F8A</span></div>
<svg class="abs" style="left:163px;top:292px" width="8" height="8" viewBox="0 0 8 8"><path d="M1.2 2 L4 4.8 L6.8 2" fill="none" stroke="#ff0000" stroke-width="1"/></svg>
<div class="mono ad" style="left:68px;top:306px">00404F7C</div>
<div class="mono w" style="left:180px;top:306px">8BD3</div>
<div class="mono" style="left:339px;top:306px"><span class="y">mov</span> <span class="g">edx</span><span class="c">,</span><span class="g">ebx</span></div>
<div class="mono cm" style="left:620px;top:306px">edx:"WideCharToMultiByte", ebx:L"_Chrome\\profile1_key.bin"</div>
<div class="mono ad" style="left:68px;top:325px">00404F7E</div>
<div class="mono w" style="left:180px;top:325px">E8 FD023E00</div>
<div class="abs" style="left:339px;top:324px;width:36px;height:19px;background:#ff0000"></div>
<div class="mono" style="left:339px;top:325px"><span class="call">call</span> <span class="m">activate.7E5280</span></div>
<div class="mono ad" style="left:68px;top:344px">00404F83</div>
<div class="mono w" style="left:180px;top:344px">8BCB</div>
<div class="mono" style="left:339px;top:344px"><span class="y">mov</span> <span class="g">ecx</span><span class="c">,</span><span class="g">ebx</span></div>
<div class="mono cm" style="left:620px;top:344px">ebx:L"_Chrome\\profile1_key.bin"</div>
<div class="mono ad" style="left:68px;top:363px">00404F85</div>
<div class="mono w" style="left:180px;top:363px">E8 E6023E00</div>
<div class="abs" style="left:339px;top:362px;width:36px;height:19px;background:#ff0000"></div>
<div class="mono" style="left:339px;top:363px"><span class="call">call</span> <span class="m">activate.7E5270</span></div>
<div class="mono ad" style="left:68px;top:382px">00404F8A</div>
<div class="mono w" style="left:180px;top:382px">8947 14</div>
<div class="mono" style="left:339px;top:382px"><span class="y">mov</span> <span class="m">dword ptr [</span><span class="m">edi</span><span class="m">+</span><span class="w">0x14</span><span class="m">]</span><span class="c">,</span><span class="g">eax</span></div>
<div class="mono ad" style="left:68px;top:401px">00404F8D</div>
<div class="mono w" style="left:180px;top:401px">85C0</div>
<div class="mono" style="left:339px;top:401px"><span class="y">test</span> <span class="g">eax</span><span class="c">,</span><span class="g">eax</span></div>
<div class="abs" style="left:339px;top:419px;width:27px;height:1px;background:#ffff00"></div>
<svg class="abs" style="left:0;top:0" width="62" height="437" viewBox="0 0 62 437">
<g fill="none" stroke="#808080" stroke-width="1">
<path d="M51 48.5 H5.5 V314.5 H49" stroke-dasharray="4 2"/>
<path d="M46 311 L49.5 314.5 L46 318"/>
<path d="M51 295.5 H16.5 V390.5 H49"/>
<path d="M46 387 L49.5 390.5 L46 394"/>
<path d="M51 428.5 H17.5 V436" stroke-dasharray="4 2"/>
<path d="M14 432.5 L17.5 436 L21 432.5"/>
</g>
<rect x="0" y="248" width="21" height="19" fill="#4040ff"/>
<path d="M5.5 248 V267" stroke="#a0a0c0" stroke-width="1" stroke-dasharray="4 2" fill="none"/>
<path d="M21 257 H48.5" stroke="#4040ff" stroke-width="2" fill="none"/>
<path d="M44.6 252.6 L49 257 L44.6 261.4" stroke="#4040ff" stroke-width="1.8" fill="none"/>
</svg>
<div class="mono w" style="left:-6px;top:249px;width:27px;overflow:hidden">EIP</div>
<div class="abs" style="left:64px;top:420px;width:1166px;height:17px;background:#fff"></div>
<div class="abs" style="left:65px;top:421px;width:1165px;height:15px;background:#f0f0f0"></div>
<div class="abs" style="left:81px;top:421px;width:710px;height:15px;background:#cdcdcd"></div>
<svg class="abs" style="left:65px;top:421px" width="16" height="15" viewBox="0 0 16 15"><path d="M9.3 4 L5.3 7.5 L9.3 11" fill="none" stroke="#505050" stroke-width="1.8"/></svg>
<svg class="abs" style="left:1213px;top:421px" width="16" height="15" viewBox="0 0 16 15"><path d="M7.7 4 L11.7 7.5 L7.7 11" fill="none" stroke="#505050" stroke-width="1.8"/></svg>
</div>
<div class="abs" style="left:19px;top:712px;width:62px;height:1px;background:#8492a4"></div>
<div class="abs" style="left:19px;top:713px;width:1230px;height:1px;background:#f4f4f4"></div>
<div class="abs" style="left:19px;top:714px;width:1230px;height:1px;background:#7c8896"></div>
<div class="abs" style="left:19px;top:715px;width:1230px;height:1px;background:#000"></div>
</body></html>
